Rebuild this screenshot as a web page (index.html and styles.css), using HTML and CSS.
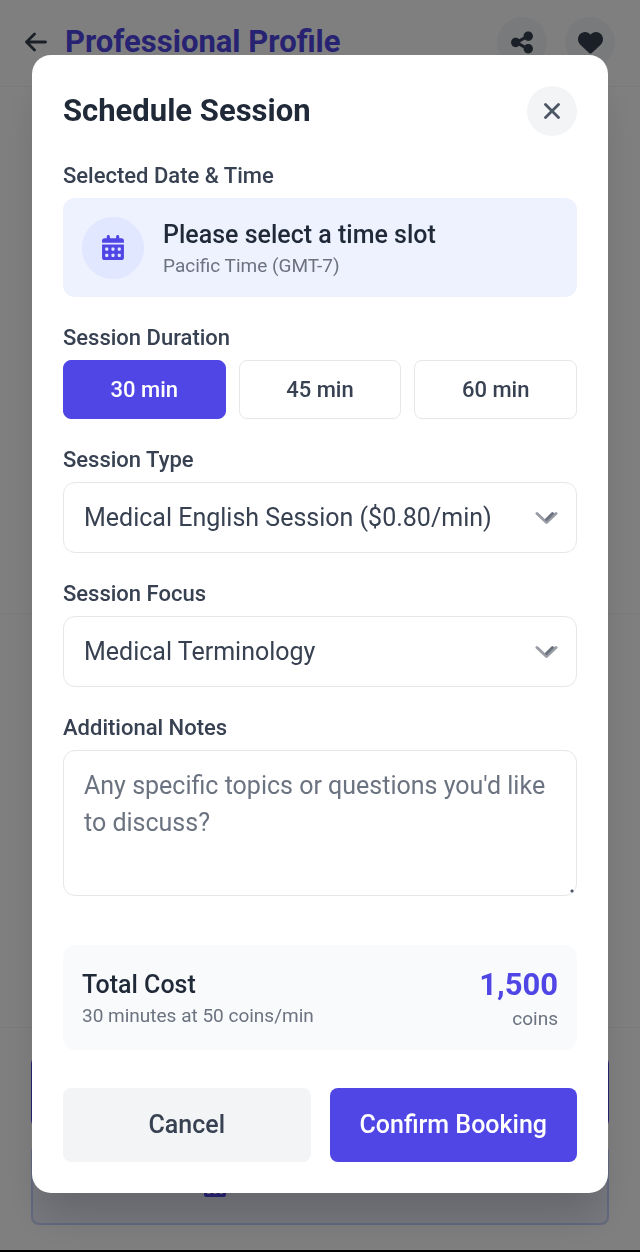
FILE: index.html
```html
<!DOCTYPE html>
<html lang="en">
<head>
    <meta charset="UTF-8">
    <meta name="viewport" content="width=device-width, initial-scale=1.0">
    <title>Schedule Session</title>
    <link rel="stylesheet" href="styles.css">
</head>
<body>

    <!-- profile page -->
    <div class="page">
        <header class="topbar">
            <a class="back" href="#" aria-label="Back">
                <svg width="22" height="20" viewBox="0 0 22 20"><path d="M9.500 2 1.500 10l8 8M1.500 10H20.500" fill="none" stroke="currentColor" stroke-width="2.800" stroke-linecap="round" stroke-linejoin="round"/></svg>
            </a>
            <h1>Professional Profile</h1>
            <button class="round" type="button" aria-label="Share">
                <svg width="22" height="25" viewBox="0 0 448 512"><path fill="currentColor" d="M352 224c53 0 96-43 96-96s-43-96-96-96s-96 43-96 96c0 4 .2 8 .7 11.900l-94.100 47C145.400 170.200 121.900 160 96 160c-53 0-96 43-96 96s43 96 96 96c25.900 0 49.400-10.200 66.600-26.900l94.100 47c-.5 3.900-.7 7.800-.7 11.900c0 53 43 96 96 96s96-43 96-96s-43-96-96-96c-25.900 0-49.400 10.200-66.600 26.900l-94.100-47c.5-3.900 .7-7.800 .7-11.900s-.2-8-.7-11.900l94.100-47C302.600 213.800 326.100 224 352 224z"/></svg>
            </button>
            <button class="round" type="button" aria-label="Favourite">
                <svg width="25" height="25" viewBox="0 0 512 512"><path fill="currentColor" d="M47.600 300.400L228.300 469.100c7.500 7 17.400 10.900 27.700 10.900s20.200-3.900 27.700-10.900L464.400 300.400c30.400-28.300 47.600-68 47.600-109.500v-5.800c0-69.900-50.500-129.500-119.400-141C347 36.500 300.600 51.400 268 84L256 96 244 84c-32.600-32.600-79-47.500-124.600-39.900C50.500 55.600 0 115.200 0 185.100v5.800c0 41.500 17.200 81.200 47.600 109.500z"/></svg>
            </button>
        </header>
        <div class="panel panel-big"></div>
        <div class="panel"></div>
        <div class="page-actions">
            <div class="bar"></div>
            <button class="open" type="button">
                <svg width="22" height="25" viewBox="0 0 448 512"><path fill="currentColor" fill-rule="evenodd" d="M96 0h64v64H288V0h64v64h48c26.500 0 48 21.500 48 48v48H0V112C0 85.500 21.500 64 48 64H96zM0 192H448V464c0 26.500-21.500 48-48 48H48c-26.500 0-48-21.500-48-48zM64 256v64h64v-64zm128 0v64h64v-64zm128 0v64h64v-64zM64 384v64h64v-64zm128 0v64h64v-64zm128 0v64h64v-64z"/></svg>
                Schedule Session
            </button>
        </div>
    </div>

    <!-- booking modal -->
    <div class="overlay">
        <form class="modal" role="dialog" aria-labelledby="modal-title">
            <div class="modal-head">
                <h2 id="modal-title">Schedule Session</h2>
                <button class="round" type="button" aria-label="Close">
                    <svg width="16" height="16" viewBox="0 0 16 16"><path d="M1.500 1.500l13 13M14.500 1.500l-13 13" fill="none" stroke="currentColor" stroke-width="2.800" stroke-linecap="round"/></svg>
                </button>
            </div>

            <div class="form-group">
                <h3 class="label">Selected Date &amp; Time</h3>
                <div class="slot">
                    <div class="slot-icon">
                        <svg width="22" height="25" viewBox="0 0 448 512"><path fill="currentColor" d="M128 0c17.700 0 32 14.300 32 32V64H288V32c0-17.700 14.300-32 32-32s32 14.300 32 32V64h48c26.500 0 48 21.500 48 48v48H0V112C0 85.500 21.500 64 48 64H96V32c0-17.700 14.300-32 32-32zM0 192H448V464c0 26.500-21.500 48-48 48H48c-26.500 0-48-21.500-48-48V192zm64 80v32c0 8.800 7.200 16 16 16h32c8.800 0 16-7.200 16-16V272c0-8.800-7.200-16-16-16H80c-8.800 0-16 7.200-16 16zm128 0v32c0 8.800 7.200 16 16 16h32c8.800 0 16-7.200 16-16V272c0-8.800-7.200-16-16-16H208c-8.800 0-16 7.200-16 16zm144-16c-8.800 0-16 7.200-16 16v32c0 8.800 7.200 16 16 16h32c8.800 0 16-7.200 16-16V272c0-8.800-7.200-16-16-16H336zM64 400v32c0 8.800 7.200 16 16 16h32c8.800 0 16-7.200 16-16V400c0-8.800-7.200-16-16-16H80c-8.800 0-16 7.200-16 16zm144-16c-8.800 0-16 7.200-16 16v32c0 8.800 7.200 16 16 16h32c8.800 0 16-7.200 16-16V400c0-8.800-7.200-16-16-16H208zm112 16v32c0 8.800 7.200 16 16 16h32c8.800 0 16-7.200 16-16V400c0-8.800-7.200-16-16-16H336c-8.800 0-16 7.200-16 16z"/></svg>
                    </div>
                    <div>
                        <div class="strong">Please select a time slot</div>
                        <div class="small">Pacific Time (GMT-7)</div>
                    </div>
                </div>
            </div>

            <div class="form-group">
                <h3 class="label">Session Duration</h3>
                <div class="durations">
                    <button class="active" type="button">30 min</button>
                    <button type="button">45 min</button>
                    <button type="button">60 min</button>
                </div>
            </div>

            <div class="form-group">
                <label class="label" for="type">Session Type</label>
                <div class="select">
                    <select class="field" id="type" name="type">
                        <option>Medical English Session ($0.80/min)</option>
                    </select>
                    <svg class="chevron" width="24" height="16" viewBox="0 0 24 16" fill="none" stroke-linecap="round" stroke-linejoin="round"><path d="M3 3.500l9.500 9 9.500-9" stroke="#9a9ca6" stroke-width="3"/><path d="M12.500 9.500l6-6" stroke="#6b7280" stroke-width="3"/></svg>
                </div>
            </div>

            <div class="form-group">
                <label class="label" for="focus">Session Focus</label>
                <div class="select">
                    <select class="field" id="focus" name="focus">
                        <option>Medical Terminology</option>
                    </select>
                    <svg class="chevron" width="24" height="16" viewBox="0 0 24 16" fill="none" stroke-linecap="round" stroke-linejoin="round"><path d="M3 3.500l9.500 9 9.500-9" stroke="#9a9ca6" stroke-width="3"/><path d="M12.500 9.500l6-6" stroke="#6b7280" stroke-width="3"/></svg>
                </div>
            </div>

            <div class="form-group">
                <label class="label" for="notes">Additional Notes</label>
                <textarea class="field" id="notes" name="notes" rows="3" placeholder="Any specific topics or questions you'd like to discuss?"></textarea>
            </div>

            <div class="total">
                <div>
                    <div class="strong">Total Cost</div>
                    <div class="small">30 minutes at 50 coins/min</div>
                </div>
                <div class="price">
                    <div class="amount">1,500</div>
                    <div class="small">coins</div>
                </div>
            </div>

            <div class="actions">
                <button class="cancel" type="button">Cancel</button>
                <button class="confirm" type="submit">Confirm Booking</button>
            </div>
        </form>
    </div>

</body>
</html>
```
FILE: styles.css
```css
*{ box-sizing: border-box; }
html{ background: #000; }
body{
    margin: 0;
    font-family: Roboto, sans-serif;
    color: #1f2937;
}
h1, h2, h3{ margin: 0; }
svg{ display: block; }
button, select, textarea{
    font-family: inherit;
    margin: 0;
}
button{
    border: 0;
    padding: 0;
    cursor: pointer;
}

/* page behind */
.page{
    display: flex;
    flex-direction: column;
    min-height: calc(100vh - 2px);
    background: #fff;
}
.topbar{
    display: flex;
    align-items: center;
    gap: 18px;
    padding: 17px 25px 19px;
    border-bottom: 1px solid #f3f4f6;
}
.topbar h1{
    flex: 1;
    font-size: 31px;
    line-height: 44px;
    color: #4f46e5;
}
.back{ color: #374151; }
.round{
    display: flex;
    align-items: center;
    justify-content: center;
    width: 50px;
    height: 50px;
    border-radius: 50%;
    background: #f3f4f6;
    color: #4b5563;
}
.topbar .round{ color: #374151; }
.panel{
    flex: 11;
    border-bottom: 1px solid #f3f4f6;
}
.panel-big{ flex: 14; }
.page-actions{
    display: flex;
    flex-direction: column;
    gap: 16px;
    padding: 28px 31px 25px;
}
.bar{
    height: 72px;
    border-radius: 8px;
    background: #4f46e5;
}
.open{
    display: flex;
    align-items: center;
    justify-content: center;
    gap: 12px;
    padding: 20px;
    border: 2px solid #c7d2fe;
    border-radius: 8px;
    background: #eef2ff;
    color: #4f46e5;
    font-size: 25px;
    font-weight: 500;
    line-height: 37px;
}

/* modal */
.overlay{
    position: fixed;
    inset: 0;
    display: flex;
    align-items: center;
    justify-content: center;
    padding: 0 32px 4px;
    background: rgba(0, 0, 0, .5);
}
.modal{
    width: 100%;
    padding: 31px;
    border-radius: 19px;
    background: #fff;
    box-shadow: 0 31px 39px -8px rgba(0, 0, 0, .15);
}
.modal-head{
    display: flex;
    align-items: center;
    justify-content: space-between;
    margin-bottom: 24px;
}
.modal-head h2{
    font-size: 31px;
    line-height: 44px;
}
.form-group{ margin-bottom: 25px; }
.label{
    display: block;
    margin-bottom: 7px;
    font-size: 22px;
    font-weight: 500;
    line-height: 31px;
    color: #374151;
}
.slot{
    display: flex;
    align-items: center;
    gap: 19px;
    padding: 18px 19px;
    border-radius: 12px;
    background: #eef2ff;
}
.slot-icon{
    display: flex;
    align-items: center;
    justify-content: center;
    width: 62px;
    height: 62px;
    border-radius: 50%;
    background: #e0e7ff;
    color: #4f46e5;
}
.strong{
    font-size: 25px;
    font-weight: 500;
    line-height: 37px;
}
.small{
    font-size: 19px;
    line-height: 26px;
    color: #6b7280;
}
.durations{
    display: grid;
    grid-template-columns: repeat(3, 1fr);
    gap: 13px;
}
.durations button{
    padding: 13px 0;
    border: 1px solid #e5e7eb;
    border-radius: 8px;
    background: #fff;
    color: #374151;
    font-size: 22px;
    font-weight: 500;
    line-height: 31px;
}
.durations .active{
    border-color: #4f46e5;
    background: #4f46e5;
    color: #fff;
}
.field{
    display: block;
    width: 100%;
    padding: 16px 20px;
    border: 1px solid #e5e7eb;
    border-radius: 12px;
    background: #fff;
    color: #374151;
    font-size: 25px;
    line-height: 37px;
}
.field::placeholder{ color: #6b7280; }
textarea.field{ min-height: 146px; }
textarea.field::-webkit-resizer{
    background: radial-gradient(circle at 11px 11px, #4b5563 1px, transparent 2px);
}
.select{ position: relative; }
.select .field{
    appearance: none;
    height: 71px;
}
.chevron{
    position: absolute;
    top: 28px;
    right: 19px;
    pointer-events: none;
}
.total{
    display: flex;
    align-items: center;
    justify-content: space-between;
    margin: 49px 0 38px;
    padding: 18px 19px;
    border-radius: 12px;
    background: #f9fafb;
}
.price{ text-align: right; }
.amount{
    font-size: 31px;
    font-weight: 700;
    line-height: 43px;
    color: #4f46e5;
}
.actions{
    display: grid;
    grid-template-columns: 1fr 1fr;
    gap: 19px;
}
.actions button{
    padding: 19px 0;
    border-radius: 8px;
    font-size: 25px;
    font-weight: 500;
    line-height: 36px;
}
.cancel{
    background: #f3f4f6;
    color: #374151;
}
.confirm{
    background: #4f46e5;
    color: #fff;
}
```
